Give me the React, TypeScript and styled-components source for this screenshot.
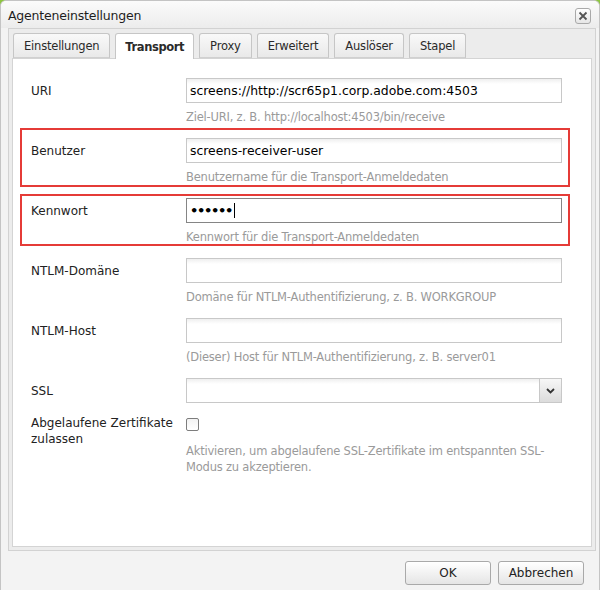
import React from 'react'
import styled, { createGlobalStyle } from 'styled-components'

const GlobalStyle = createGlobalStyle`
  html, body {
    margin: 0;
    padding: 0;
    background: #8dc63f;
  }
  body {
    font-family: "DejaVu Sans", Verdana, sans-serif;
  }
  * {
    box-sizing: border-box;
  }
`

const Window = styled.div`
  width: 600px;
  height: 590px;
  display: flex;
  flex-direction: column;
  border: 1px solid #c4c4c4;
  border-bottom: none;
  border-radius: 6px 6px 0 0;
  background: #f3f3f3;
  overflow: hidden;
`

const TitleBar = styled.div`
  height: 27px;
  flex: none;
  display: flex;
  align-items: center;
  justify-content: space-between;
  padding: 2px 8px 0 7px;
  background: linear-gradient(#fbfbfb, #ececec);
  color: #1e1e1e;
  font-size: 12.5px;
  letter-spacing: -0.2px;
`

const CloseButton = styled.button`
  width: 16px;
  height: 16px;
  padding: 0;
  display: flex;
  align-items: center;
  justify-content: center;
  border: 1px solid #a9a9a9;
  border-radius: 3px;
  background: linear-gradient(#ffffff, #e6e6e6);
  color: #555;
`

const TabArea = styled.div`
  flex: none;
  height: 523px;
  margin: 0 3px 0 7px;
  padding: 4px 3px 3px 3px;
  display: flex;
  flex-direction: column;
  border: 1px solid #d2d2d2;
  background: #ececec;
`

const TabStrip = styled.div`
  display: flex;
  gap: 5px;
  padding-left: 1px;
  height: 25px;
  flex: none;
`

const Tab = styled.div<{ $active?: boolean }>`
  height: ${p => (p.$active ? 26 : 25)}px;
  padding: 0 ${p => (p.$active ? 9 : 10)}px;
  display: flex;
  align-items: center;
  border: 1px solid #c6c6c6;
  border-bottom: ${p => (p.$active ? 'none' : '1px solid #d0d0d0')};
  border-radius: 3px 3px 0 0;
  background: ${p => (p.$active ? '#ffffff' : 'linear-gradient(#f9f9f9, #e9e9e9)')};
  color: #2a2a2a;
  font-size: 11.5px;
  font-weight: ${p => (p.$active ? 'bold' : 'normal')};
  letter-spacing: ${p => (p.$active ? -0.4 : -0.2)}px;
  position: relative;
  z-index: ${p => (p.$active ? 1 : 0)};
`

const Panel = styled.div`
  flex: 1;
  border: 1px solid #d4d4d4;
  background: #ffffff;
  padding: 19px 0 0 18px;
`

const Row = styled.div<{ $gap: number; $mark?: [number, number] }>`
  position: relative;
  width: 531px;
  display: grid;
  grid-template-columns: 155px 376px;
  margin-bottom: ${p => p.$gap}px;

  ${p =>
    p.$mark &&
    `
    &::after {
      content: '';
      position: absolute;
      left: -11px;
      right: -8px;
      top: -${p.$mark[0]}px;
      bottom: -${p.$mark[1]}px;
      border: 2px solid #e53b37;
      pointer-events: none;
    }
  `}
`

const Label = styled.div<{ $top?: number }>`
  padding-top: ${p => p.$top ?? 5}px;
  font-size: 12px;
  line-height: 16px;
  color: #222;
`

const Field = styled.div`
  display: flex;
  flex-direction: column;
`

const TextInput = styled.input`
  width: 376px;
  height: 25px;
  margin: 0;
  padding: 0 3px;
  border: 1px solid #c8c8c8;
  background: linear-gradient(#efefef, #ffffff 5px);
  font-family: inherit;
  font-size: 12.4px;
  color: #000;
  outline: none;
`

const FocusedBox = styled.div`
  width: 376px;
  height: 25px;
  padding: 0 3px;
  display: flex;
  align-items: center;
  border: 1px solid #858585;
  background: #ffffff;
  font-size: 13px;
  font-weight: bold;
  letter-spacing: -1.3px;
  color: #000;
`

const Caret = styled.span`
  width: 1px;
  height: 15px;
  margin-left: 2px;
  background: #000;
`

const SelectBox = styled.div`
  width: 376px;
  height: 25px;
  display: flex;
  justify-content: flex-end;
  border: 1px solid #c8c8c8;
  background: linear-gradient(#efefef, #ffffff 5px);
`

const SelectArrow = styled.div`
  width: 22px;
  display: flex;
  align-items: center;
  justify-content: center;
  border-left: 1px solid #c8c8c8;
  background: linear-gradient(#f7f7f7, #dcdcdc);
`

const Checkbox = styled.div`
  width: 13px;
  height: 13px;
  margin-top: 3px;
  border: 1px solid #7d7d7d;
  border-radius: 2px;
  background: linear-gradient(#f2f2f2, #ffffff);
`

const Hint = styled.div<{ $top?: number }>`
  margin-top: ${p => p.$top ?? 6}px;
  font-size: 11.5px;
  line-height: 16px;
  color: #9a9a9a;
  letter-spacing: -0.2px;
`

const Footer = styled.div`
  flex: 1;
  display: flex;
  justify-content: flex-end;
  align-items: flex-start;
  gap: 7px;
  padding: 10px 15px 0 0;
`

const Button = styled.button`
  width: 86px;
  height: 24px;
  border: 1px solid #a9a9a9;
  border-radius: 3px;
  background: linear-gradient(#ffffff, #e5e5e5);
  box-shadow: inset 0 1px 0 #ffffff;
  font-family: inherit;
  font-size: 12px;
  color: #222;
`

const tabs = ['Einstellungen', 'Transport', 'Proxy', 'Erweitert', 'Auslöser', 'Stapel']

export default function App() {
  return (
    <>
      <GlobalStyle />
      <Window>
        <TitleBar>
          <span>Agenteneinstellungen</span>
          <CloseButton aria-label="Schließen">
            <svg width="10" height="10" viewBox="0 0 10 10">
              <path d="M1.5 1.5 L8.5 8.5 M8.5 1.5 L1.5 8.5" stroke="#555" strokeWidth="1.8" />
            </svg>
          </CloseButton>
        </TitleBar>
        <TabArea>
          <TabStrip>
            {tabs.map(t => (
              <Tab key={t} $active={t === 'Transport'}>{t}</Tab>
            ))}
          </TabStrip>
          <Panel>
            <Row $gap={13}>
              <Label>URI</Label>
              <Field>
                <TextInput readOnly value="screens://http://scr65p1.corp.adobe.com:4503" />
                <Hint>Ziel-URI, z. B. http://localhost:4503/bin/receive</Hint>
              </Field>
            </Row>
            <Row $gap={13} $mark={[10, 2]}>
              <Label>Benutzer</Label>
              <Field>
                <TextInput readOnly value="screens-receiver-user" />
                <Hint>Benutzername für die Transport-Anmeldedaten</Hint>
              </Field>
            </Row>
            <Row $gap={13} $mark={[4, 1]}>
              <Label>Kennwort</Label>
              <Field>
                <FocusedBox>
                  ••••••<Caret />
                </FocusedBox>
                <Hint>Kennwort für die Transport-Anmeldedaten</Hint>
              </Field>
            </Row>
            <Row $gap={13}>
              <Label>NTLM-Domäne</Label>
              <Field>
                <TextInput readOnly value="" />
                <Hint>Domäne für NTLM-Authentifizierung, z. B. WORKGROUP</Hint>
              </Field>
            </Row>
            <Row $gap={13}>
              <Label>NTLM-Host</Label>
              <Field>
                <TextInput readOnly value="" />
                <Hint>(Dieser) Host für NTLM-Authentifizierung, z. B. server01</Hint>
              </Field>
            </Row>
            <Row $gap={12}>
              <Label>SSL</Label>
              <Field>
                <SelectBox>
                  <SelectArrow>
                    <svg width="9" height="6" viewBox="0 0 9 6">
                      <path d="M1 1 L4.5 4.5 L8 1" fill="none" stroke="#333" strokeWidth="1.8" />
                    </svg>
                  </SelectArrow>
                </SelectBox>
              </Field>
            </Row>
            <Row $gap={0}>
              <Label $top={0}>
                Abgelaufene Zertifikate
                <br />
                zulassen
              </Label>
              <Field>
                <Checkbox />
                <Hint $top={12}>
                  Aktivieren, um abgelaufene SSL-Zertifikate im entspannten SSL-
                  <br />
                  Modus zu akzeptieren.
                </Hint>
              </Field>
            </Row>
          </Panel>
        </TabArea>
        <Footer>
          <Button>OK</Button>
          <Button>Abbrechen</Button>
        </Footer>
      </Window>
    </>
  )
}
